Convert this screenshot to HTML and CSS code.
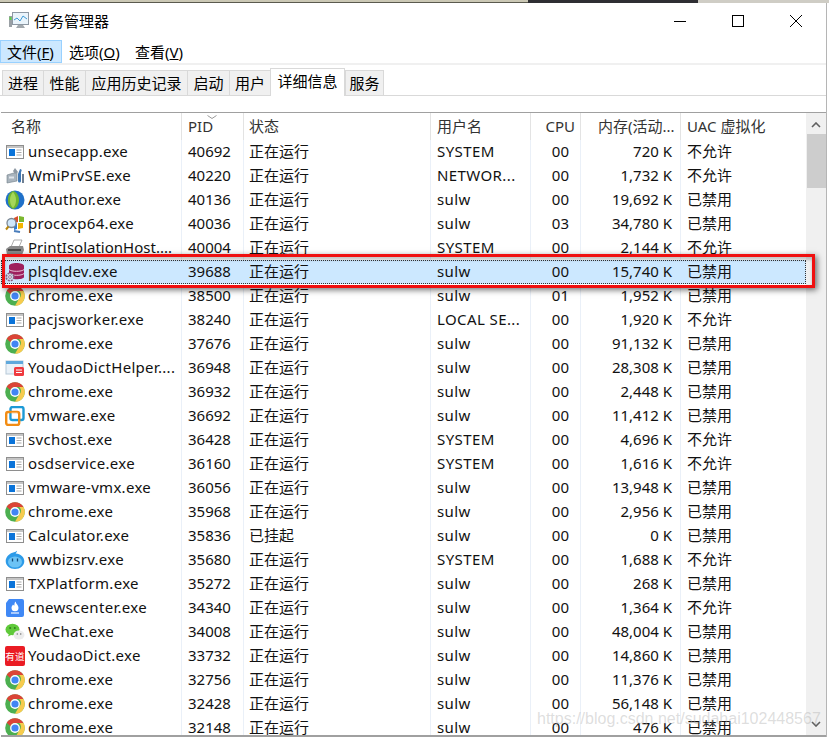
FILE: index.html
```html
<!DOCTYPE html>
<html lang="zh-CN">
<head>
<meta charset="utf-8">
<title>任务管理器</title>
<link rel="stylesheet" href="styles.css">
</head>
<body>
<svg class="defs" width="0" height="0" aria-hidden="true">
  <symbol id="i-exe" viewBox="0 0 20 20">
    <rect x="1.5" y="3.5" width="17" height="13" fill="#fff" stroke="#8e8e8e"/>
    <rect x="2" y="4" width="16" height="2" fill="#c4c4c4"/>
    <rect x="4" y="7" width="6" height="7" fill="#0a73d9"/>
    <path d="M11.5 8h5M11.5 10.5h5M11.5 13h5" stroke="#a8a8a8"/>
  </symbol>
  <symbol id="i-chrome" viewBox="0 0 20 20">
    <circle cx="10" cy="10" r="9.800" fill="#4caf50"/>
    <path d="M10 .2a9.800 9.800 0 0 1 8.500 4.900H10a4.900 4.900 0 0 0-4.500 3.100L1.700 4.800A9.800 9.800 0 0 1 10 .2z" fill="#db4437"/>
    <path d="M18.500 5.100A9.800 9.800 0 0 1 10 19.800l4.200-7.200a4.900 4.900 0 0 0 0-7.500z" fill="#f7cb4d"/>
    <circle cx="10" cy="10" r="4.900" fill="#fff"/>
    <circle cx="10" cy="10" r="3.600" fill="#4285f4"/>
  </symbol>
  <symbol id="i-wmi" viewBox="0 0 20 20">
    <path d="M2 9l10-3v9l-10 2z" fill="#a9b4bd" stroke="#6f7c86" stroke-width=".6"/>
    <path d="M10 2l3 4-3 2-2-3z" fill="#8d98a2"/>
    <path d="M4 10.500h5v2H4z" fill="#dfe5ea"/>
    <path d="M15 3c2 0 2 2 1 3v9c0 2-3 2-3 0V8z" fill="#3f78b5"/>
    <path d="M18 8v9" stroke="#4a5f78" stroke-width="1.600"/>
  </symbol>
  <symbol id="i-globe" viewBox="0 0 20 20">
    <circle cx="10" cy="10" r="9.500" fill="#1f70c9"/>
    <path d="M8 1c4 1 6 5 6 9s-2 8-6 9c-4-2-5-5-5-9s1-7 5-9z" fill="#6fb52f"/>
    <path d="M8 2c2 2 3 5 3 8s-1 6-3 8c-2-2-3-5-3-8s1-6 3-8z" fill="#a5d65a"/>
  </symbol>
  <symbol id="i-procexp" viewBox="0 0 20 20">
    <path d="M9 4l4-2v6l-4 1z" fill="#d94f2a"/>
    <path d="M14 2l5 1v5l-5 0z" fill="#7cb82f"/>
    <path d="M13 9h5v5l-5 1z" fill="#f4b400"/>
    <path d="M9 10l3-1v6l-3 1z" fill="#2d7dd2"/>
    <circle cx="6.500" cy="9" r="4.500" fill="#cfe7fb" stroke="#7b8794" stroke-width="1.300"/>
    <path d="M3.500 12.500l-2.500 3" stroke="#b8860b" stroke-width="2"/>
    <path d="M9 17l6 1" stroke="#4a7dbb" stroke-width="2"/>
  </symbol>
  <symbol id="i-print" viewBox="0 0 20 20">
    <path d="M6 9l3-7h8l-3 7z" fill="#fff" stroke="#8b8b8b" stroke-width=".7"/>
    <path d="M1 11l4-3h13l1 4-2 5H2z" fill="#8a8a8a"/>
    <path d="M3 12h13" stroke="#333" stroke-width="1.500"/>
  </symbol>
  <symbol id="i-plsql" viewBox="0 0 20 20">
    <path d="M4 4c0-4 15-4 15 0v11c0 3-15 3-15 0z" fill="#9e1f5e"/>
    <path d="M4 7.500c2 2.400 13 2.400 15 0M4 11.500c2 2.400 13 2.400 15 0" fill="none" stroke="#e8c2d6" stroke-width="1"/>
    <circle cx="5" cy="15" r="3.800" fill="#cfe0ee" stroke="#8c5a80" stroke-width="1.600" stroke-dasharray="2 1"/>
    <circle cx="5" cy="15" r="1.400" fill="#fff" stroke="#8c5a80" stroke-width=".8"/>
  </symbol>
  <symbol id="i-ydh" viewBox="0 0 20 20">
    <rect x="1" y="3" width="17" height="13" fill="#e9f1f8" stroke="#b7c9d8"/>
    <rect x="1" y="3" width="17" height="3" fill="#5fa8dc"/>
    <rect x="9" y="9" width="10" height="9" rx="1.500" fill="#ef3a3f"/>
    <path d="M11 12h6M11 14.500h6" stroke="#fff"/>
  </symbol>
  <symbol id="i-vm" viewBox="0 0 20 20">
    <rect x="5.500" y="1" width="13" height="13" rx="2" fill="none" stroke="#1c9ad6" stroke-width="2.400"/>
    <rect x="1.200" y="6" width="13" height="13" rx="2" fill="none" stroke="#f28c13" stroke-width="2.400"/>
    <rect x="6.500" y="6" width="6" height="7" fill="#fff" fill-opacity=".3"/>
  </symbol>
  <symbol id="i-ww" viewBox="0 0 20 20">
    <path d="M12 .8c0 1.400-1 2-1.400 2.600 5 .4 8.700 3.700 8.700 7.700 0 4.500-4 8-9.300 8S.7 15.600.7 11.100C.7 6.900 5 3 9 2.300 10.300 2 11 1.600 12 .8z" fill="#2d9be8"/>
    <ellipse cx="10" cy="12" rx="7" ry="5.500" fill="#6cc3f5"/>
    <path d="M7.500 8.500v3M12.500 8.500v3" stroke="#124a7a" stroke-width="1.300"/>
  </symbol>
  <symbol id="i-news" viewBox="0 0 20 20">
    <path d="M4 1h13a2 2 0 0 1 2 2v14a2 2 0 0 1-2 2H3a2 2 0 0 1-2-2V5z" fill="#3f88f5"/>
    <path d="M10.500 3.500c.5 2.500 3 3.500 3 6.200a3.500 3.500 0 0 1-7 0c0-1.500 1-2.200 1.500-3.200.5.800 1 1 1.300 1.200.3-1.500 0-2.800 1.200-4.200z" fill="#fff"/>
    <path d="M6 15h8" stroke="#cfe2ff" stroke-width="1.500"/>
  </symbol>
  <symbol id="i-wechat" viewBox="0 0 20 20">
    <ellipse cx="7.500" cy="7.500" rx="7" ry="5.800" fill="#5fc93a"/>
    <path d="M4 11.500l-1 3 4-2z" fill="#5fc93a"/>
    <circle cx="5.200" cy="6" r="1" fill="#2f7d1b"/>
    <circle cx="9.800" cy="6" r="1" fill="#2f7d1b"/>
    <ellipse cx="14" cy="13" rx="5.500" ry="4.600" fill="#ececec"/>
    <circle cx="12.300" cy="12" r=".8" fill="#777"/>
    <circle cx="15.700" cy="12" r=".8" fill="#777"/>
  </symbol>
  <symbol id="i-yd" viewBox="0 0 20 20">
    <rect width="20" height="20" rx="2" fill="#ea1c24"/>
    <text x="10" y="13.500" font-size="9.500" text-anchor="middle" fill="#fff" font-family="Noto Sans CJK SC, sans-serif">有道</text>
  </symbol>
</svg>

<div class="screen">
  <div class="topstrip"><span class="strip-a"></span><span class="strip-b"></span><span class="strip-c"></span></div>
  <div class="window">
    <header class="titlebar">
      <div class="title">
        <svg class="appicon" viewBox="0 0 20 18" width="20" height="18">
          <rect x="3.500" y=".5" width="16" height="12" fill="#eaf4fb" stroke="#8d98a3"/>
          <path d="M5 8l3-2 3 3 3-5 4 3" fill="none" stroke="#3f9bd6"/>
          <path d="M9 13h5l2 3H7z" fill="#a2a8ad"/>
          <rect x="0" y="4" width="3" height="11" fill="#9aa0a5"/>
          <rect x=".5" y="5" width="2" height="3" fill="#5fd04a"/>
        </svg>
        <span class="title-text">任务管理器</span>
      </div>
      <div class="controls">
        <svg class="ctl" viewBox="0 0 12 12" width="12" height="12"><path d="M0 6.500h12" stroke="#000"/></svg>
        <svg class="ctl" viewBox="0 0 12 12" width="12" height="12"><rect x=".5" y=".5" width="11" height="11" fill="none" stroke="#000"/></svg>
        <svg class="ctl" viewBox="0 0 12 12" width="12" height="12"><path d="M0 0l12 12M12 0L0 12" stroke="#000" fill="none"/></svg>
      </div>
    </header>
    <nav class="menubar">
      <span class="menu menu-on">文件(<u>F</u>)</span>
      <span class="menu">选项(<u>O</u>)</span>
      <span class="menu">查看(<u>V</u>)</span>
    </nav>
    <div class="tabs">
      <span class="tab tab-1">进程</span>
      <span class="tab tab-2">性能</span>
      <span class="tab tab-3">应用历史记录</span>
      <span class="tab tab-4">启动</span>
      <span class="tab tab-5">用户</span>
      <span class="tab tab-6 tab-on">详细信息</span>
      <span class="tab tab-7">服务</span>
    </div>
    <div class="panel">
      <div class="listwrap">
        <div class="list">
          <div class="row head">
            <span class="cell">名称</span>
            <span class="cell pid">PID<svg class="sort" viewBox="0 0 10 4" width="10" height="4"><path d="M.5 .5L5 3.500 9.500 .5" fill="none" stroke="#9a9a9a"/></svg></span>
            <span class="cell status">状态</span>
            <span class="cell">用户名</span>
            <span class="cell cpu">CPU</span>
            <span class="cell mem">内存(活动...</span>
            <span class="cell">UAC 虚拟化</span>
          </div>
          <div class="rows">
            <div class="row"><span class="cell name"><svg class="ic"><use href="#i-exe"/></svg>unsecapp.exe</span><span class="cell">40692</span><span class="cell status">正在运行</span><span class="cell user">SYSTEM</span><span class="cell num">00</span><span class="cell mem">720 K</span><span class="cell">不允许</span></div>
            <div class="row"><span class="cell name"><svg class="ic"><use href="#i-wmi"/></svg>WmiPrvSE.exe</span><span class="cell">40220</span><span class="cell status">正在运行</span><span class="cell user">NETWOR...</span><span class="cell num">00</span><span class="cell mem">1,732 K</span><span class="cell">不允许</span></div>
            <div class="row"><span class="cell name"><svg class="ic"><use href="#i-globe"/></svg>AtAuthor.exe</span><span class="cell">40136</span><span class="cell status">正在运行</span><span class="cell user">sulw</span><span class="cell num">00</span><span class="cell mem">19,692 K</span><span class="cell">已禁用</span></div>
            <div class="row"><span class="cell name"><svg class="ic"><use href="#i-procexp"/></svg>procexp64.exe</span><span class="cell">40036</span><span class="cell status">正在运行</span><span class="cell user">sulw</span><span class="cell num">03</span><span class="cell mem">34,780 K</span><span class="cell">已禁用</span></div>
            <div class="row"><span class="cell name tight"><svg class="ic"><use href="#i-print"/></svg>PrintIsolationHost....</span><span class="cell">40004</span><span class="cell status">正在运行</span><span class="cell user">SYSTEM</span><span class="cell num">00</span><span class="cell mem">2,144 K</span><span class="cell">不允许</span></div>
            <div class="row row-on"><span class="cell name"><svg class="ic"><use href="#i-plsql"/></svg>plsqldev.exe</span><span class="cell">39688</span><span class="cell status">正在运行</span><span class="cell user">sulw</span><span class="cell num">00</span><span class="cell mem">15,740 K</span><span class="cell">已禁用</span></div>
            <div class="row"><span class="cell name"><svg class="ic"><use href="#i-chrome"/></svg>chrome.exe</span><span class="cell">38500</span><span class="cell status">正在运行</span><span class="cell user">sulw</span><span class="cell num">01</span><span class="cell mem">1,952 K</span><span class="cell">已禁用</span></div>
            <div class="row"><span class="cell name"><svg class="ic"><use href="#i-exe"/></svg>pacjsworker.exe</span><span class="cell">38240</span><span class="cell status">正在运行</span><span class="cell user">LOCAL SE...</span><span class="cell num">00</span><span class="cell mem">1,920 K</span><span class="cell">不允许</span></div>
            <div class="row"><span class="cell name"><svg class="ic"><use href="#i-chrome"/></svg>chrome.exe</span><span class="cell">37676</span><span class="cell status">正在运行</span><span class="cell user">sulw</span><span class="cell num">00</span><span class="cell mem">91,132 K</span><span class="cell">已禁用</span></div>
            <div class="row"><span class="cell name"><svg class="ic"><use href="#i-ydh"/></svg>YoudaoDictHelper....</span><span class="cell">36948</span><span class="cell status">正在运行</span><span class="cell user">sulw</span><span class="cell num">00</span><span class="cell mem">28,308 K</span><span class="cell">已禁用</span></div>
            <div class="row"><span class="cell name"><svg class="ic"><use href="#i-chrome"/></svg>chrome.exe</span><span class="cell">36932</span><span class="cell status">正在运行</span><span class="cell user">sulw</span><span class="cell num">00</span><span class="cell mem">2,448 K</span><span class="cell">已禁用</span></div>
            <div class="row"><span class="cell name"><svg class="ic"><use href="#i-vm"/></svg>vmware.exe</span><span class="cell">36692</span><span class="cell status">正在运行</span><span class="cell user">sulw</span><span class="cell num">00</span><span class="cell mem">11,412 K</span><span class="cell">已禁用</span></div>
            <div class="row"><span class="cell name"><svg class="ic"><use href="#i-exe"/></svg>svchost.exe</span><span class="cell">36428</span><span class="cell status">正在运行</span><span class="cell user">SYSTEM</span><span class="cell num">00</span><span class="cell mem">4,696 K</span><span class="cell">不允许</span></div>
            <div class="row"><span class="cell name"><svg class="ic"><use href="#i-exe"/></svg>osdservice.exe</span><span class="cell">36160</span><span class="cell status">正在运行</span><span class="cell user">SYSTEM</span><span class="cell num">00</span><span class="cell mem">1,616 K</span><span class="cell">不允许</span></div>
            <div class="row"><span class="cell name"><svg class="ic"><use href="#i-exe"/></svg>vmware-vmx.exe</span><span class="cell">36056</span><span class="cell status">正在运行</span><span class="cell user">sulw</span><span class="cell num">00</span><span class="cell mem">13,948 K</span><span class="cell">已禁用</span></div>
            <div class="row"><span class="cell name"><svg class="ic"><use href="#i-chrome"/></svg>chrome.exe</span><span class="cell">35968</span><span class="cell status">正在运行</span><span class="cell user">sulw</span><span class="cell num">00</span><span class="cell mem">2,956 K</span><span class="cell">已禁用</span></div>
            <div class="row"><span class="cell name"><svg class="ic"><use href="#i-exe"/></svg>Calculator.exe</span><span class="cell">35836</span><span class="cell status">已挂起</span><span class="cell user">sulw</span><span class="cell num">00</span><span class="cell mem">0 K</span><span class="cell">已禁用</span></div>
            <div class="row"><span class="cell name"><svg class="ic"><use href="#i-ww"/></svg>wwbizsrv.exe</span><span class="cell">35680</span><span class="cell status">正在运行</span><span class="cell user">SYSTEM</span><span class="cell num">00</span><span class="cell mem">1,688 K</span><span class="cell">不允许</span></div>
            <div class="row"><span class="cell name"><svg class="ic"><use href="#i-exe"/></svg>TXPlatform.exe</span><span class="cell">35272</span><span class="cell status">正在运行</span><span class="cell user">sulw</span><span class="cell num">00</span><span class="cell mem">268 K</span><span class="cell">已禁用</span></div>
            <div class="row"><span class="cell name"><svg class="ic"><use href="#i-news"/></svg>cnewscenter.exe</span><span class="cell">34340</span><span class="cell status">正在运行</span><span class="cell user">sulw</span><span class="cell num">00</span><span class="cell mem">1,364 K</span><span class="cell">不允许</span></div>
            <div class="row"><span class="cell name"><svg class="ic"><use href="#i-wechat"/></svg>WeChat.exe</span><span class="cell">34008</span><span class="cell status">正在运行</span><span class="cell user">sulw</span><span class="cell num">00</span><span class="cell mem">48,004 K</span><span class="cell">已禁用</span></div>
            <div class="row"><span class="cell name"><svg class="ic"><use href="#i-yd"/></svg>YoudaoDict.exe</span><span class="cell">33732</span><span class="cell status">正在运行</span><span class="cell user">sulw</span><span class="cell num">00</span><span class="cell mem">14,860 K</span><span class="cell">已禁用</span></div>
            <div class="row"><span class="cell name"><svg class="ic"><use href="#i-chrome"/></svg>chrome.exe</span><span class="cell">32756</span><span class="cell status">正在运行</span><span class="cell user">sulw</span><span class="cell num">00</span><span class="cell mem">11,376 K</span><span class="cell">已禁用</span></div>
            <div class="row"><span class="cell name"><svg class="ic"><use href="#i-chrome"/></svg>chrome.exe</span><span class="cell">32428</span><span class="cell status">正在运行</span><span class="cell user">sulw</span><span class="cell num">00</span><span class="cell mem">56,148 K</span><span class="cell">已禁用</span></div>
            <div class="row"><span class="cell name"><svg class="ic"><use href="#i-chrome"/></svg>chrome.exe</span><span class="cell">32148</span><span class="cell status">正在运行</span><span class="cell user">sulw</span><span class="cell num">00</span><span class="cell mem">476 K</span><span class="cell">已禁用</span></div>
          </div>
        </div>
        <div class="scrollbar">
          <svg class="sb-arrow" viewBox="0 0 10 6" width="10" height="6"><path d="M1 5l4-4 4 4" fill="none" stroke="#606060" stroke-width="1.600"/></svg>
          <div class="sb-thumb"></div>
          <svg class="sb-arrow sb-down" viewBox="0 0 10 6" width="10" height="6"><path d="M1 1l4 4 4-4" fill="none" stroke="#606060" stroke-width="1.600"/></svg>
        </div>
      </div>
    </div>
    <div class="callout"></div>
    <div class="watermark">https://blog.csdn.net/sudahai102448567</div>
  </div>
</div>
</body>
</html>
```

FILE: styles.css
```css
* { box-sizing: border-box; }
html, body { margin: 0; padding: 0; background: #fff; }
body {
  width: 829px;
  height: 737px;
  overflow: hidden;
  font-family: "Noto Sans", "Noto Sans CJK SC", sans-serif;
  font-size: 15px;
  color: #000;
}
.defs { position: absolute; }
.screen { display: flex; flex-direction: column; height: 737px; }

.topstrip { display: flex; height: 3px; flex: none; }
.strip-a { width: 528px; background: linear-gradient(#cbc8b5 0, #cbc8b5 2px, #5a5a4e 2px); }
.strip-b { width: 170px; background: #2e2e33; }
.strip-c { flex: 1; background: #cfcdc5; }

.window {
  position: relative;
  flex: 1;
  width: 827px;
  display: flex;
  flex-direction: column;
  background: #fff;
  border-right: 1px solid #b5b5b5;
  min-height: 0;
}

.titlebar {
  height: 37px;
  flex: none;
  display: flex;
  justify-content: space-between;
  align-items: center;
  padding: 0 24px 0 9px;
}
.title { display: flex; align-items: center; gap: 5px; font-size: 15px; margin-top: -1px; }
.title-text { margin-top: -2px; }
.appicon { display: block; }
.controls { display: flex; gap: 46px; margin-top: -1px; }
.ctl { display: block; }

.menubar { height: 23px; flex: none; display: flex; font-size: 15px; }
.menu {
  display: flex;
  align-items: center;
  height: 23px;
  padding: 0 6px;
  border: 1px solid transparent;
  white-space: nowrap;
}
.menu:nth-child(1) { width: 62px; }
.menu:nth-child(2) { width: 66px; }
.menu-on { background: #cce8ff; border-color: #99d1ff; }

.tabs {
  height: 33px;
  flex: none;
  display: flex;
  align-items: flex-end;
  padding-left: 2px;
  border-top: 2px solid #f0f0f0;
  border-bottom: 1px solid #d9d9d9;
}
.tab {
  height: 25px;
  display: flex;
  align-items: center;
  justify-content: center;
  background: #f0f0f0;
  border: 1px solid #d9d9d9;
  border-bottom: 0;
  border-right: 0;
  font-size: 15px;
  padding-bottom: 2px;
}
.tab-1 { width: 41px; }
.tab-2 { width: 42px; }
.tab-3 { width: 102px; }
.tab-4 { width: 42px; }
.tab-5 { width: 41px; }
.tab-6 { width: 75px; }
.tab-7 { width: 39px; border-right: 1px solid #d9d9d9; }
.tab-on {
  height: 28px;
  margin-bottom: -1px;
  background: #fff;
  border-right: 1px solid #d9d9d9;
  padding-bottom: 4px;
  position: relative;
}

.panel { flex: 1; min-height: 0; padding: 16px 0 0 1px; display: flex; }
.listwrap {
  flex: 1;
  display: flex;
  min-height: 0;
  border-top: 1px solid #a0a0a0;
  border-bottom: 2px solid #a0a0a0;
  overflow: hidden;
}
.list { width: 805px; flex: none; overflow: hidden; }

.row {
  display: grid;
  grid-template-columns: 181px 62px 187px 100px 50px 100px 125px;
  height: 24px;
  align-items: stretch;
}
.cell {
  display: flex;
  align-items: center;
  padding-left: 6px;
  border-right: 1px solid #eaf0f8;
  white-space: nowrap;
  overflow: hidden;
  line-height: 24px;
  height: 100%;
}
.row .cell:last-child { border-right: 0; }
.head { height: 27px; color: #333; }
.head .cell { border-right-color: #e3e3e3; padding-bottom: 2px; position: relative; }
.head .cell:first-child { padding-left: 10px; }
.head .cpu { justify-content: flex-end; padding-left: 0; padding-right: 5px; }
.head .mem { justify-content: flex-start; padding-left: 17px; padding-right: 0; overflow: hidden; }
.sort { position: absolute; left: 25px; top: 2px; }

.rows { height: 597px; overflow: hidden; }
.rows .cell { color: #111; padding-bottom: 2px; }
.name { padding-left: 4px; letter-spacing: .3px; }
.tight { letter-spacing: 0; }
.user { letter-spacing: .4px; }
.status, .rows .status, .head .status { padding-left: 5px; }
.ic { width: 20px; height: 20px; flex: none; margin-right: 3px; margin-top: 2px; }
.num { justify-content: flex-end; padding-right: 11px; }
.mem { justify-content: flex-end; padding-right: 8px; }

.row-on { background: #cce8ff; outline: 1px dotted #333; outline-offset: -1px; }
.row-on .cell { border-right-color: transparent; }

.scrollbar {
  flex: 1;
  background: #f0f0f0;
  display: flex;
  flex-direction: column;
  align-items: center;
  position: relative;
}
.sb-arrow { margin-top: 9px; flex: none; }
.sb-thumb { width: 100%; height: 54px; margin-top: 6px; margin-left: 1px; background: #cdcdcd; flex: none; }
.sb-down { margin-top: auto; margin-bottom: 8px; }

.callout {
  position: absolute;
  left: 2px;
  top: 251px;
  width: 813px;
  height: 34px;
  border: 3px solid #f01010;
  box-shadow: 2px 2px 6px rgba(0, 0, 0, .55), inset 0 3px 3px rgba(0, 0, 0, .22);
  pointer-events: none;
}
.watermark {
  position: absolute;
  left: 537px;
  top: 707px;
  font-family: "Liberation Sans", sans-serif;
  font-size: 16px;
  color: rgba(175, 175, 175, .42);
  white-space: nowrap;
  pointer-events: none;
}
```
